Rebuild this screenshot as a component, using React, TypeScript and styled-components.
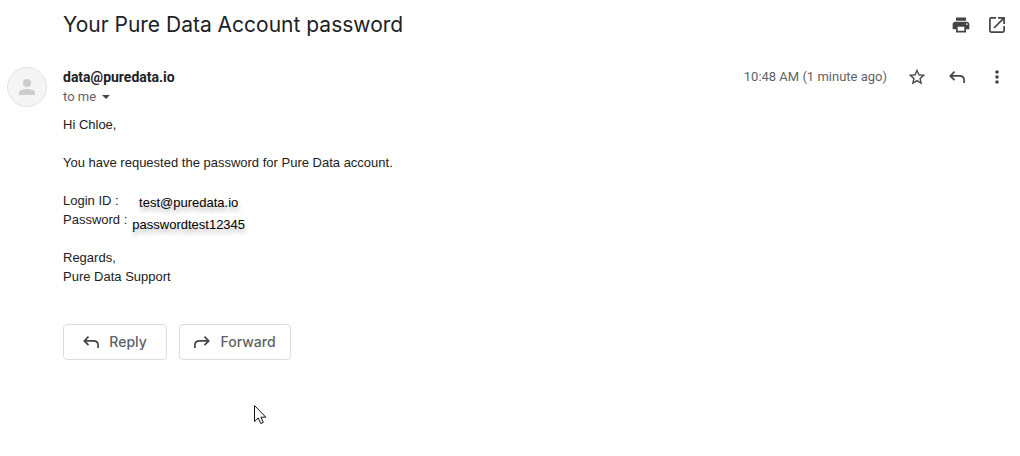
import React from 'react';
import styled, { createGlobalStyle } from 'styled-components';

const GlobalStyle = createGlobalStyle`
  * { box-sizing: border-box; }
  body {
    margin: 0;
    background: #fff;
    color: #202124;
    font-family: Roboto, sans-serif;
  }
`;

const Page = styled.main`
  position: relative;
  padding: 4px 13px 96px 7px;
`;

const TitleBar = styled.header`
  display: flex;
  align-items: center;
  height: 42px;
  padding-left: 56px;
`;

const Title = styled.h1`
  flex: 1;
  margin: 0;
  font: 400 21px/28px Inter, sans-serif;
`;

const Actions = styled.div<{ $gap: number }>`
  display: flex;
  align-items: center;
  gap: ${({ $gap }) => $gap}px;
`;

const IconButton = styled.button`
  display: flex;
  padding: 0;
  border: 0;
  background: none;
  color: #444;
  cursor: pointer;
`;

const Message = styled.article`
  display: grid;
  grid-template-columns: 40px 1fr;
  column-gap: 16px;
  padding-top: 20px;
`;

const Avatar = styled.div`
  display: flex;
  align-items: center;
  justify-content: center;
  width: 40px;
  height: 40px;
  margin-top: 1px;
  border: 1px solid #e2e2e2;
  border-radius: 50%;
  background: #f5f5f5;
  color: #ccc;
`;

const SenderRow = styled.div`
  display: flex;
  align-items: center;
  height: 21px;
`;

const Sender = styled.h2`
  flex: 1;
  margin: 0;
  font-size: 14px;
  line-height: 20px;
  font-weight: 700;
`;

const Time = styled.time`
  margin-right: 20px;
  color: #5f6368;
  font-size: 13px;
  line-height: 20px;
`;

const Recipient = styled.button`
  display: flex;
  align-items: center;
  gap: 6px;
  padding: 0;
  border: 0;
  background: none;
  color: #5f6368;
  font: 13px/20px Roboto, sans-serif;
`;

const Body = styled.div`
  padding-top: 8px;
  color: #222;
  font: 13px/19px "Liberation Sans", Arial, sans-serif;
`;

const Paragraph = styled.p`
  margin: 0 0 19px;
`;

const Credentials = styled.div`
  display: flex;
  gap: 5px;
  height: 38px;
  margin-bottom: 19px;
`;

const Labels = styled.div`
  display: flex;
  flex-direction: column;
`;

const Values = styled.div`
  display: flex;
  flex-direction: column;
  align-items: center;
  padding-top: 1px;
  color: #000;
  line-height: 22px;
  text-shadow: 1px 4px 4px rgba(0, 0, 0, 0.3);
`;

const Replies = styled.div`
  display: flex;
  gap: 12px;
  padding-top: 19px;
`;

const ReplyButton = styled.button<{ $wide?: boolean }>`
  display: flex;
  align-items: center;
  justify-content: center;
  gap: 8px;
  width: ${({ $wide }) => ($wide ? 112 : 104)}px;
  height: 36px;
  padding: 0 2px 0 0;
  border: 1px solid #dadce0;
  border-radius: 4px;
  background: #fff;
  color: #5f6368;
  font: 500 14px/20px Inter, sans-serif;
  cursor: pointer;

  svg { color: #444; }
`;

const Pointer = styled.svg`
  position: absolute;
  left: 254px;
  top: 405px;
`;

const ReplyArrow = ({ flip = false }: { flip?: boolean }) => (
  <svg width="20" height="20" viewBox="0 0 20 20" fill="none" stroke="currentColor" strokeWidth="1.7" aria-hidden="true">
    <g transform={flip ? 'translate(20 0) scale(-1 1)' : undefined}>
      <path d="M7.500 4.700 3.300 8.900l4.200 4.200M3.300 8.900h9.200c2.800 0 4.600 1.700 4.600 4.400v2.700" />
    </g>
  </svg>
);

export default function App() {
  return (
    <>
      <GlobalStyle />
      <Page>
        <TitleBar>
          <Title>Your Pure Data Account password</Title>
          <Actions $gap={16}>
            <IconButton aria-label="Print all">
              <svg width="20" height="20" viewBox="0 0 24 24" fill="currentColor">
                <path d="M19 8H5c-1.66 0-3 1.34-3 3v6h4v4h12v-4h4v-6c0-1.66-1.34-3-3-3zm-3 11H8v-5h8v5zm3-7c-.55 0-1-.45-1-1s.45-1 1-1 1 .45 1 1-.45 1-1 1zm-1-9H6v4h12V3z" />
              </svg>
            </IconButton>
            <IconButton aria-label="In new window">
              <svg width="20" height="20" viewBox="0 0 20 20" fill="none" stroke="currentColor" strokeWidth="1.7">
                <path d="M9 2.9H4.2c-.8 0-1.3.5-1.3 1.3v11.6c0 .8.5 1.3 1.3 1.3h11.6c.8 0 1.3-.5 1.3-1.3V11M11 2.9h6.1V9M16.8 3.2 7 13" />
              </svg>
            </IconButton>
          </Actions>
        </TitleBar>
        <Message>
          <Avatar>
            <svg width="24" height="24" viewBox="0 0 24 24" fill="currentColor" aria-hidden="true">
              <circle cx="12" cy="8" r="4" />
              <path d="M4 20v-2.2C4 15.2 8.6 14 12 14s8 1.200 8 3.800V20z" />
            </svg>
          </Avatar>
          <div>
            <SenderRow>
              <Sender>data@puredata.io</Sender>
              <Time>10:48 AM (1 minute ago)</Time>
              <Actions $gap={20}>
                <IconButton aria-label="Star">
                  <svg width="20" height="20" viewBox="0 0 24 24" fill="currentColor">
                    <path d="M22 9.240l-7.190-.62L12 2 9.190 8.630 2 9.240l5.460 4.730L5.820 21 12 17.270 18.180 21l-1.630-7.030L22 9.240zM12 15.400l-3.760 2.270 1-4.280-3.320-2.880 4.380-.38L12 6.100l1.710 4.040 4.380.38-3.320 2.880 1 4.280L12 15.400z" />
                  </svg>
                </IconButton>
                <IconButton aria-label="Reply to message">
                  <ReplyArrow />
                </IconButton>
                <IconButton aria-label="More">
                  <svg width="20" height="20" viewBox="0 0 20 20" fill="currentColor">
                    <circle cx="10" cy="5" r="1.800" />
                    <circle cx="10" cy="10" r="1.800" />
                    <circle cx="10" cy="15" r="1.800" />
                  </svg>
                </IconButton>
              </Actions>
            </SenderRow>
            <Recipient aria-label="Show details">
              to me
              <svg width="8" height="4" viewBox="0 0 8 4" fill="#444" aria-hidden="true">
                <path d="M0 0h8L4 4z" />
              </svg>
            </Recipient>
            <Body>
              <Paragraph>Hi Chloe,</Paragraph>
              <Paragraph>You have requested the password for Pure Data account.</Paragraph>
              <Credentials>
                <Labels>
                  <span>Login ID :</span>
                  <span>Password :</span>
                </Labels>
                <Values>
                  <span>test@puredata.io</span>
                  <span>passwordtest12345</span>
                </Values>
              </Credentials>
              <Paragraph>
                Regards,
                <br />
                Pure Data Support
              </Paragraph>
            </Body>
            <Replies>
              <ReplyButton>
                <ReplyArrow />
                Reply
              </ReplyButton>
              <ReplyButton $wide>
                <ReplyArrow flip />
                Forward
              </ReplyButton>
            </Replies>
          </div>
        </Message>
        <Pointer width="13" height="20" viewBox="0 0 13 20" aria-hidden="true">
          <path d="M.5.5v16l3.700-3.500 2.600 5.500 2.500-1.100-2.400-5.200h4.900z" fill="#fff" stroke="#111122" />
        </Pointer>
      </Page>
    </>
  );
}
